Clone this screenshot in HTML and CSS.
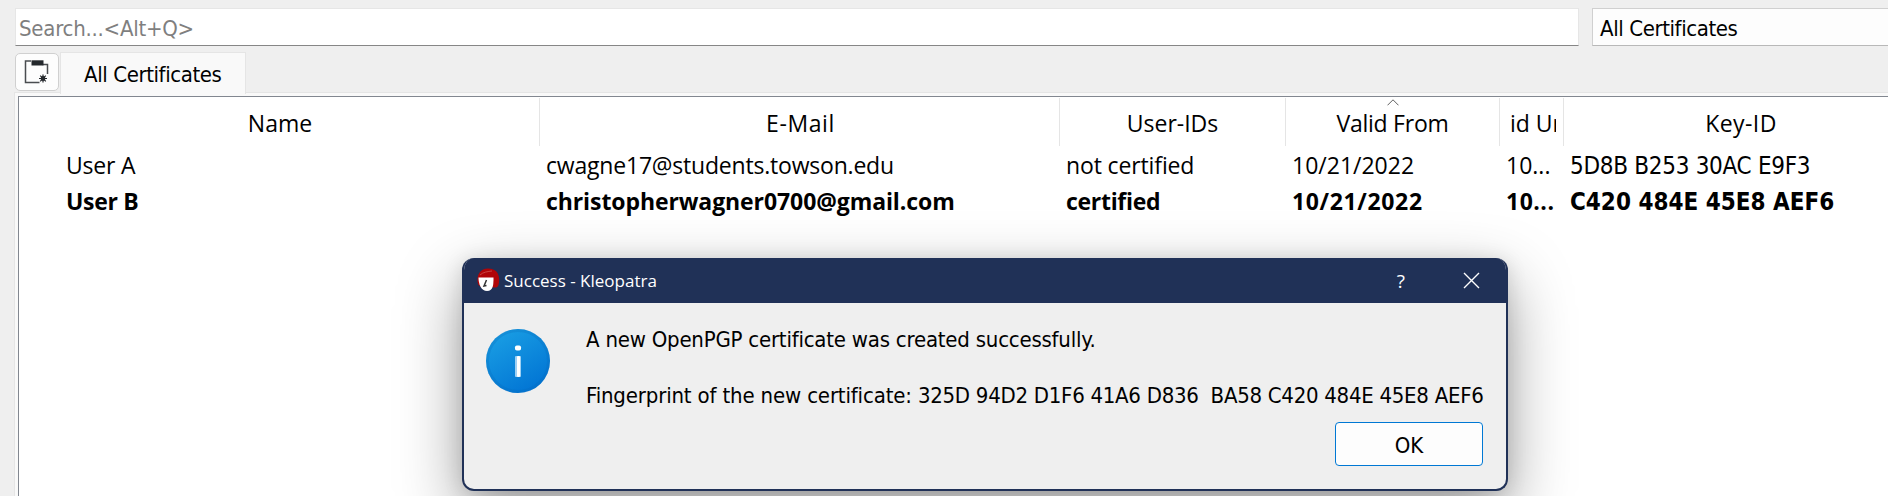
FILE: index.html
```
<!DOCTYPE html>
<html lang="en">
<head>
<meta charset="utf-8">
<title>Kleopatra</title>
<link rel="stylesheet" href="styles.css">
</head>
<body>
<div class="window">
  <div class="toolbar">
    <div class="search"><span class="search-hint">Search...&lt;Alt+Q&gt;</span></div>
    <div class="filter"><span class="ui-label">All Certificates</span></div>
  </div>
  <div class="tabs">
    <button class="new-tab" aria-label="New tab">
      <svg width="26" height="26" viewBox="0 0 26 26">
        <path d="M8 2H2.500V23.500H16.500M19.500 5.500H24.500V15" fill="none" stroke="#4a4d50" stroke-width="1.500"/>
        <path d="M8.500 1.300H20.500V6.500H8.500Z" fill="#24282c"/>
        <path d="M20 15.500V23.500M16 19.500H24M17.200 16.700L22.800 22.300M22.800 16.700L17.200 22.300" stroke="#24282c" stroke-width="1.200"/>
        <circle cx="20" cy="19.500" r="2.400" fill="#24282c"/>
      </svg>
    </button>
    <div class="tab"><span class="ui-label">All Certificates</span></div>
  </div>
  <div class="pane">
    <div class="table">
      <div class="row head">
        <div class="cell"><span class="h-name">Name</span></div>
        <div class="cell"><span class="h-mail">E-Mail</span></div>
        <div class="cell">User-IDs</div>
        <div class="cell"><svg class="sort" width="12" height="7" viewBox="0 0 12 7"><path d="M.5 6.300L6 .8L11.500 6.300" fill="none" stroke="#606060"/></svg><span class="h-from">Valid From</span></div>
        <div class="cell clip"><span class="clip-box">id Un</span></div>
        <div class="cell"><span class="h-key">Key-ID</span></div>
      </div>
      <div class="row">
        <div class="cell name">User A</div>
        <div class="cell mail">cwagne17@students.towson.edu</div>
        <div class="cell status">not certified</div>
        <div class="cell">10/21/2022</div>
        <div class="cell">10...</div>
        <div class="cell key">5D8B B253 30AC E9F3</div>
      </div>
      <div class="row own">
        <div class="cell name">User B</div>
        <div class="cell mail">christopherwagner0700@gmail.com</div>
        <div class="cell status">certified</div>
        <div class="cell date">10/21/2022</div>
        <div class="cell until">10...</div>
        <div class="cell key">C420 484E 45E8 AEF6</div>
      </div>
    </div>
  </div>
</div>
<div class="dialog">
  <div class="titlebar">
    <svg class="app-icon" width="24" height="24" viewBox="0 0 24 24">
      <path d="M2.500 17C0 12 1.500 .5 12 .5C22.500 .5 24.500 9 22.500 17C21.500 20 19 20 16 19L5 19Z" fill="#b00508"/>
      <path d="M4 7C7 4 12 3.500 16 3" fill="none" stroke="#cf5450" stroke-width=".8"/>
      <path d="M2.500 9.500H17.500C17.500 16 17.500 23 11 23C5 23 2.500 16 2.500 9.500Z" fill="#fff"/>
      <path d="M10.500 12L8 18L10.500 17.500" fill="none" stroke="#333" stroke-width="1.500"/>
    </svg>
    <span class="title">Success - Kleopatra</span>
    <span class="help">?</span>
    <svg class="close" width="17" height="17" viewBox="0 0 17 17"><path d="M1 1L16 16M16 1L1 16" stroke="#fff" stroke-width="1.400"/></svg>
  </div>
  <div class="content">
    <svg class="info" width="64" height="64" viewBox="0 0 64 64">
      <defs><linearGradient id="blue" x1="0.2" y1="0" x2="0.800" y2="1"><stop offset="0" stop-color="#1a9fe4"/><stop offset="1" stop-color="#0072d3"/></linearGradient></defs>
      <circle cx="32" cy="32" r="32" fill="url(#blue)"/>
      <circle cx="32" cy="32" r="30.500" fill="none" stroke="#0868b8" stroke-opacity=".25" stroke-width="3"/>
      <rect x="29" y="16.500" width="6" height="5" rx="1.800" fill="#fff"/>
      <rect x="29" y="27" width="6" height="21" rx="1" fill="#9fd0f3"/>
      <rect x="31" y="27" width="3" height="21" rx="1" fill="#fff"/>
    </svg>
    <div class="message">
      <p>A new OpenPGP certificate was created successfully.</p>
      <p><span class="lead">Fingerprint of the new certificate: </span><span class="hex">325D 94D2 D1F6 41A6 D836&nbsp; BA58 C420 484E 45E8 AEF6</span></p>
    </div>
  </div>
  <div class="actions"><button class="ok">OK</button></div>
</div>
</body>
</html>
```
FILE: styles.css
```
* { box-sizing: border-box; }
body {
  margin: 0;
  height: 496px;
  overflow: hidden;
  background: #efefef;
  color: #000;
  font: 22px "DejaVu Sans Condensed", "DejaVu Sans", sans-serif;
}
.window { display: flex; flex-direction: column; height: 496px; padding-top: 8px; }
.toolbar { display: flex; gap: 13px; padding-left: 15px; height: 38px; }
.search {
  width: 1564px;
  padding: 3px 3px 0;
  line-height: 34px;
  background: #fff;
  border: 1px solid #e6e6e6;
  border-bottom-color: #868686;
}
.search-hint { letter-spacing: -.25px; color: #7f7f7f; }
.filter {
  flex: 1;
  padding: 3px 0 0 7px;
  line-height: 34px;
  background: #fdfdfd;
  border: 1px solid #d0d0d0;
  border-bottom-color: #b8b8b8;
  border-right: 0;
}
.ui-label { letter-spacing: -.4px; white-space: nowrap; }
.tabs { display: flex; padding: 6px 0 0 15px; height: 46px; }
.new-tab {
  display: flex;
  width: 44px;
  height: 38px;
  margin: 1px 1px 0 0;
  padding: 5px 0 0 7px;
  background: #fdfdfd;
  border: 1px solid #d0d0d0;
  border-radius: 5px;
}
.new-tab svg { display: block; flex: none; }
.tab {
  position: relative;
  z-index: 1;
  width: 186px;
  height: 42px;
  padding: 2px 0 0 23px;
  line-height: 40px;
  background: #f9f9f9;
  border: 1px solid #e5e5e5;
  border-bottom: 0;
}
.pane {
  flex: 1;
  margin-left: 14px;
  padding: 3px 0 0 3px;
  background: #f9f9f9;
  border: solid #e5e5e5;
  border-width: 1px 0 0 1px;
}
.table {
  height: 100%;
  padding-top: 1px;
  background: #fff;
  border: solid #828790;
  border-width: 1px 0 0 1px;
  font: 23px "Open Sans", "Noto Sans", sans-serif;
}
.row {
  display: grid;
  grid-template-columns: 521px 520px 226px 214px 64px 1fr;
  height: 36px;
  line-height: 36px;
}
.row .cell { padding-left: 6px; white-space: nowrap; }
.row .name { padding-left: 47px; letter-spacing: -.2px; }
.row .mail { letter-spacing: -.2px; }
.row .status { letter-spacing: -.13px; }
.row .key { font: 24px/39px "DejaVu Sans Condensed", "DejaVu Sans", sans-serif; letter-spacing: -.3px; }
.row.head { height: 49px; line-height: 51px; }
.head .cell { position: relative; height: 48px; padding: 0; text-align: center; border-right: 1px solid #e5e5e5; }
.head .cell:last-child { border-right: 0; padding-left: 30px; }
.h-name { margin-left: 2px; }
.h-mail { margin-left: 2px; letter-spacing: .6px; }
.h-from { letter-spacing: -.25px; }
.h-key { letter-spacing: .4px; }
.sort { position: absolute; left: 101px; top: 1px; }
.clip-box { display: block; overflow: hidden; width: 46px; margin-left: 10px; text-align: left; }
.own { font-weight: 700; }
.row.own .name { letter-spacing: -.3px; }
.row.own .mail { letter-spacing: -.09px; }
.row.own .status { letter-spacing: -.3px; }
.row.own .date { letter-spacing: .65px; }
.row.own .until { letter-spacing: .5px; }
.row.own .key { font-weight: 700; letter-spacing: 0; }
.dialog {
  position: absolute;
  left: 462px;
  top: 258px;
  width: 1046px;
  height: 233px;
  overflow: hidden;
  background: #efefef;
  border: 2px solid #203157;
  border-top: 0;
  border-radius: 12px;
  box-shadow: 0 24px 64px rgba(0, 0, 0, .38), 0 2px 20px rgba(0, 0, 0, .12);
}
.titlebar {
  display: flex;
  align-items: center;
  height: 45px;
  padding: 0 26px 0 12px;
  background: #203157;
  color: #fff;
  font: 17px "Open Sans", "Noto Sans", sans-serif;
}
.app-icon { margin-bottom: 1px; }
.title { flex: 1; margin-left: 4px; }
.help { margin-right: 58px; font-size: 19px; }
.content { display: flex; padding: 23px 0 0 22px; height: 115px; }
.info { margin-top: 3px; flex: none; }
.message { margin-left: 36px; }
.message p { margin: 0 0 28px; line-height: 28px; white-space: nowrap; letter-spacing: -.22px; }
.lead { letter-spacing: -.16px; }
.hex { letter-spacing: -.275px; }
.actions { display: flex; justify-content: flex-end; padding: 4px 23px 0 0; }
.ok {
  width: 148px;
  height: 44px;
  padding: 2px 0 0;
  background: #fdfdfd;
  border: 1px solid #0078d4;
  border-radius: 4px;
  color: #000;
  font: inherit;
}
```
